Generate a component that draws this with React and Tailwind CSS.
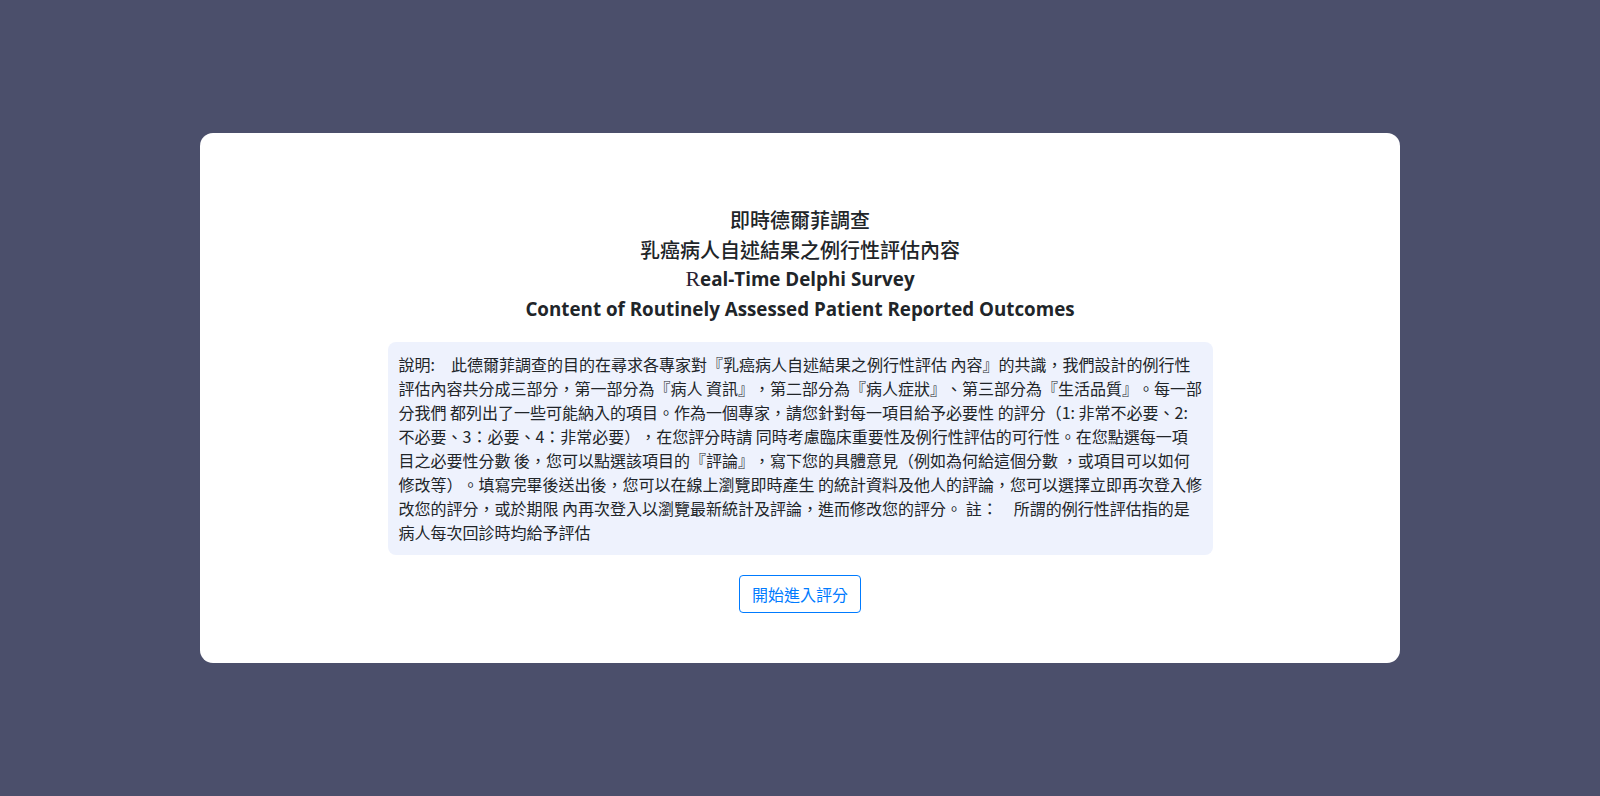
// intro copy, split where the original card breaks its lines
const introLines = [
    "說明:　此德爾菲調查的目的在尋求各專家對『乳癌病人自述結果之例行性評估 內容』的共識，我們設計的例行性",
    "評估內容共分成三部分，第一部分為『病人 資訊』，第二部分為『病人症狀』、第三部分為『生活品質』。每一部",
    "分我們 都列出了一些可能納入的項目。作為一個專家，請您針對每一項目給予必要性 的評分（1: 非常不必要、2:",
    "不必要、3：必要、4：非常必要），在您評分時請 同時考慮臨床重要性及例行性評估的可行性。在您點選每一項",
    "目之必要性分數 後，您可以點選該項目的『評論』，寫下您的具體意見（例如為何給這個分數 ，或項目可以如何",
    "修改等）。填寫完畢後送出後，您可以在線上瀏覽即時產生 的統計資料及他人的評論，您可以選擇立即再次登入修",
    "改您的評分，或於期限 內再次登入以瀏覽最新統計及評論，進而修改您的評分。 註：　所謂的例行性評估指的是",
    "病人每次回診時均給予評估",
];

export default function App() {
    return (
        <div className="min-h-[796px] w-full bg-[#4b4f6b] flex items-start justify-center pt-[133px]">
            <div className="w-[1200px] h-[530px] bg-white rounded-[13px] flex flex-col items-center pt-[72px]">
                <div className="text-center text-[20px] leading-[29.5px] text-[#212529] font-['Noto_Sans_CJK_TC',serif]">
                    <div className="font-medium">即時德爾菲調查</div>
                    <div className="font-medium">乳癌病人自述結果之例行性評估內容</div>
                    <div className="font-bold text-[18.8px] font-['Open_Sans','Noto_Sans_CJK_TC',sans-serif]">
                        <span className="font-normal text-[22px] text-[#2a1f33] font-['Liberation_Serif',serif]">R</span>eal-Time Delphi Survey
                    </div>
                    <div className="font-bold text-[18.8px] font-['Open_Sans','Noto_Sans_CJK_TC',sans-serif]">Content of Routinely Assessed Patient Reported Outcomes</div>
                </div>

                <div className="mt-[18px] w-[825px] bg-[#eef2fd] rounded-lg pl-[11px] pr-[7px] pt-2.5 pb-[11px] text-[16px] leading-6 text-[#212529] [text-spacing-trim:space-all] font-['Noto_Sans_CJK_TC',sans-serif]">
                    {introLines.map((line, i) => (
                        <div key={i} className="whitespace-nowrap">{line}</div>
                    ))}
                </div>

                <button type="button" className="mt-5 px-3 py-1.5 border border-[#007bff] text-[#007bff] rounded text-[16px] leading-6 bg-white font-['Noto_Sans_CJK_TC',sans-serif]">
                    開始進入評分
                </button>
            </div>
        </div>
    );
}
